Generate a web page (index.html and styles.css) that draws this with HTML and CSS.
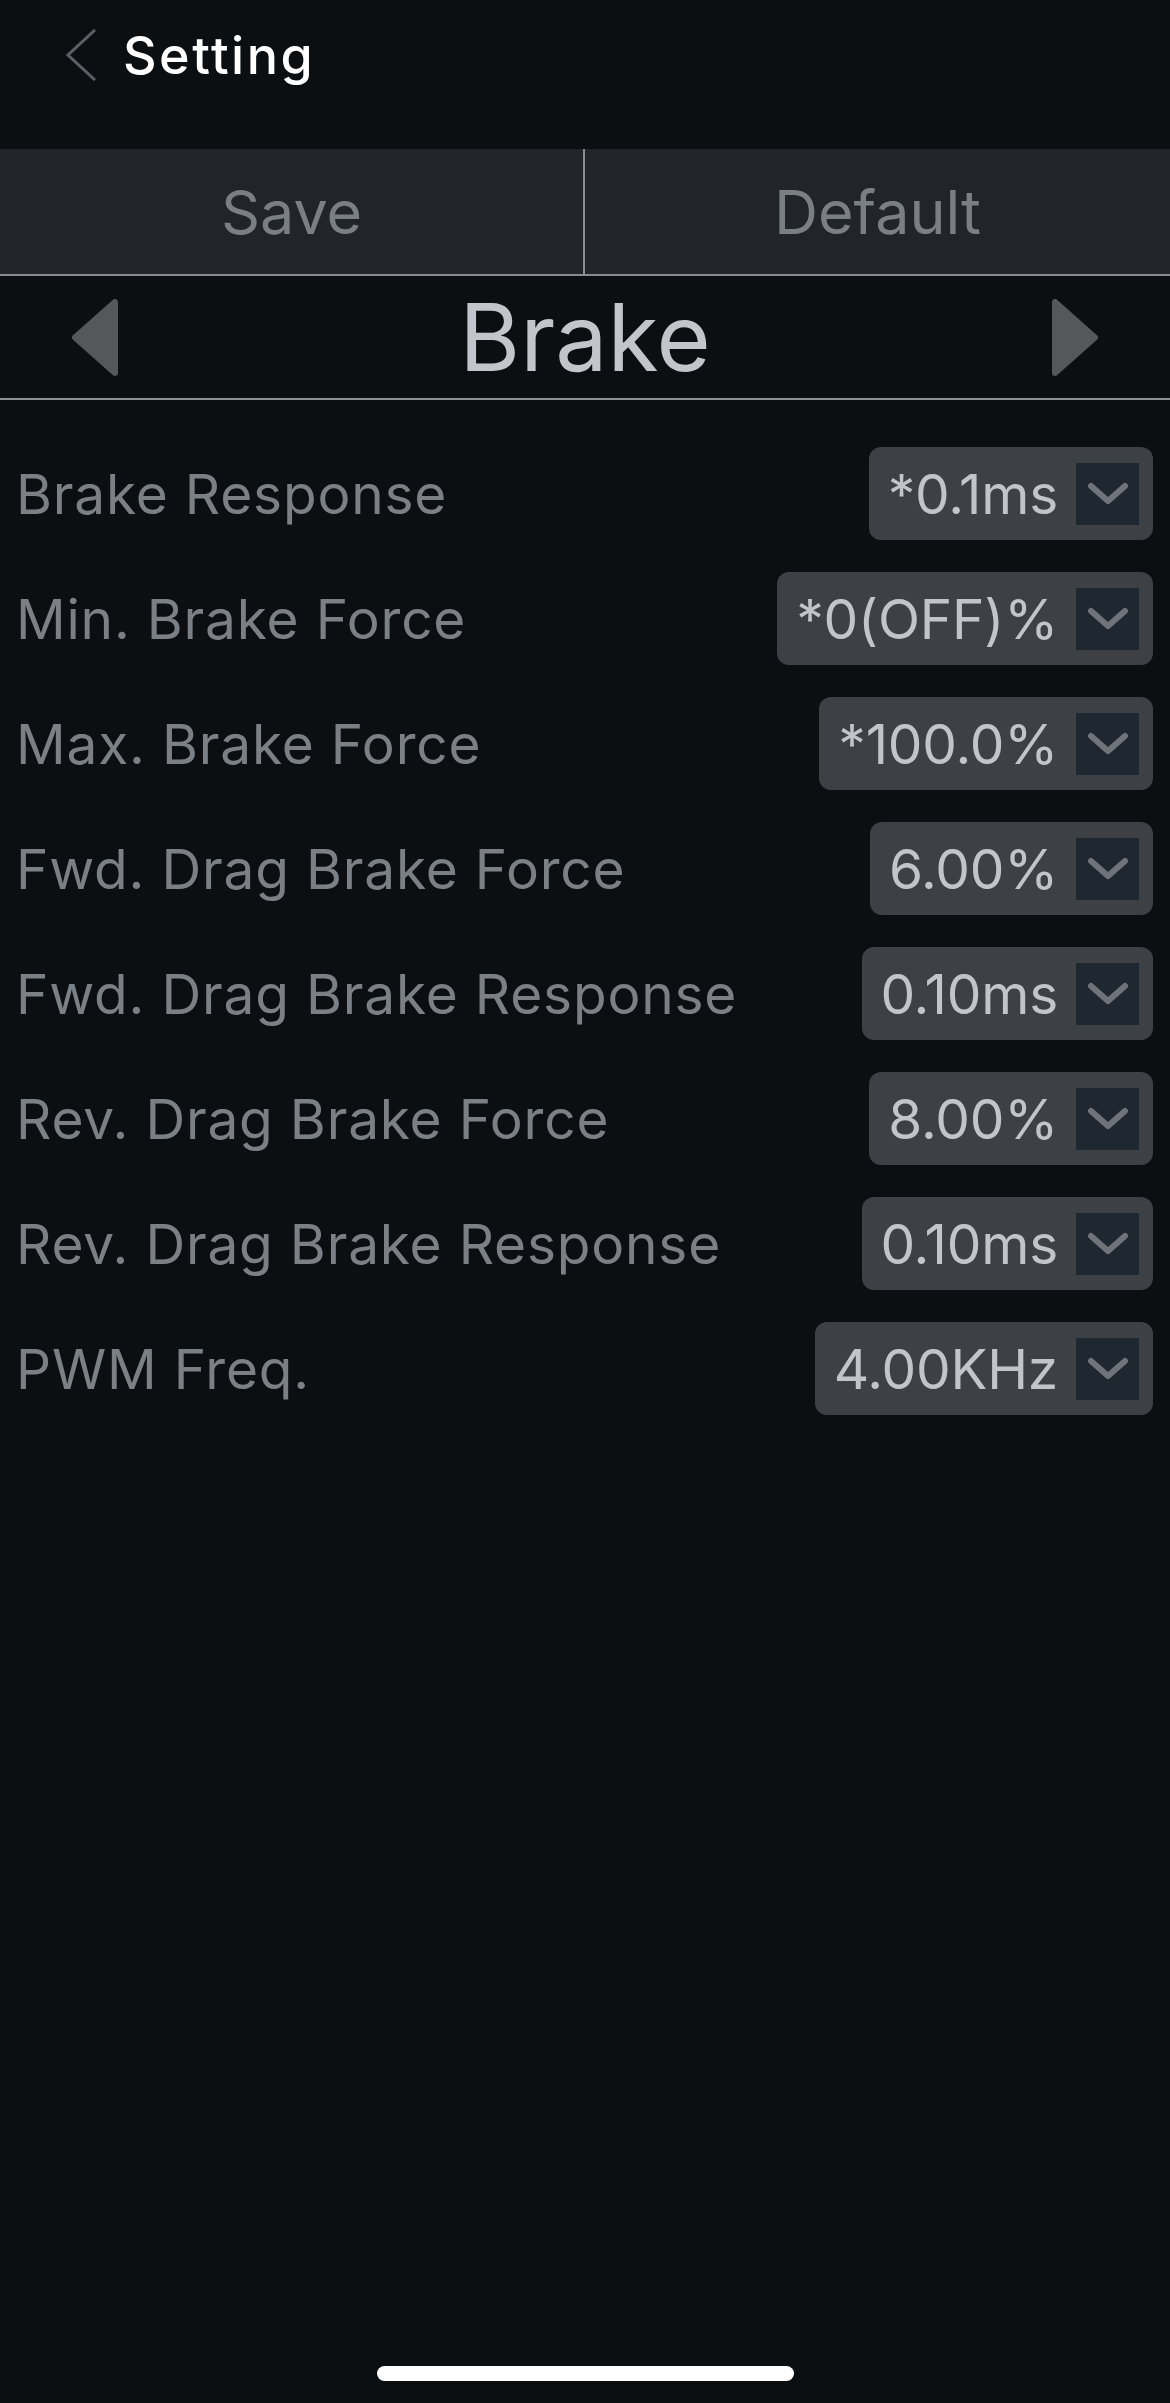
FILE: index.html
```html
<!DOCTYPE html>
<html lang="en">
<head>
  <meta charset="UTF-8">
  <title>Setting</title>
  <link rel="stylesheet" href="styles.css">
</head>
<body>
  <div class="page">
    <header class="top-bar">
      <svg class="back-icon" width="32" height="52" viewBox="0 0 32 52">
        <polyline points="29,1 2,26 29,51" fill="none" stroke="#5b6064" stroke-width="3"/>
      </svg>
      <span class="title">Setting</span>
    </header>

    <div class="actions">
      <div class="action-btn">Save</div>
      <div class="action-btn">Default</div>
    </div>

    <div class="section-nav">
      <svg class="nav-arrow" width="47" height="77" viewBox="0 0 47 77">
        <polygon points="44,3 44,74 4,38.5" fill="#54585b" stroke="#54585b" stroke-width="6" stroke-linejoin="round"/>
      </svg>
      <span class="section-title">Brake</span>
      <svg class="nav-arrow" width="47" height="77" viewBox="0 0 47 77">
        <polygon points="3,3 3,74 43,38.5" fill="#54585b" stroke="#54585b" stroke-width="6" stroke-linejoin="round"/>
      </svg>
    </div>

    <div id="settingList" class="setting-list"></div>

    <div class="home-indicator"></div>
  </div>

  <script>
    // 刹车设置项：名称 + 当前值
    const settings = [
      { name: 'Brake Response', value: '*0.1ms' },
      { name: 'Min. Brake Force', value: '*0(OFF)%' },
      { name: 'Max. Brake Force', value: '*100.0%' },
      { name: 'Fwd. Drag Brake Force', value: '6.00%' },
      { name: 'Fwd. Drag Brake Response', value: '0.10ms' },
      { name: 'Rev. Drag Brake Force', value: '8.00%' },
      { name: 'Rev. Drag Brake Response', value: '0.10ms' },
      { name: 'PWM Freq.', value: '4.00KHz' }
    ];

    const settingList = document.getElementById('settingList');

    function renderSettings() {
      settingList.innerHTML = '';
      settings.forEach(item => {
        const row = document.createElement('div');
        row.className = 'setting-row';

        const label = document.createElement('span');
        label.className = 'setting-label';
        label.textContent = item.name;

        const select = document.createElement('div');
        select.className = 'value-select';

        const value = document.createElement('span');
        value.className = 'value-text';
        value.textContent = item.value;

        const drop = document.createElement('span');
        drop.className = 'drop-btn';
        drop.innerHTML = '<svg width="42" height="24" viewBox="0 0 42 24"><polyline points="4,4 21,19 38,4" fill="none" stroke="#6f747a" stroke-width="6" stroke-linecap="round" stroke-linejoin="round"/></svg>';

        select.appendChild(value);
        select.appendChild(drop);
        row.appendChild(label);
        row.appendChild(select);
        settingList.appendChild(row);
      });
    }

    renderSettings();
  </script>
</body>
</html>
```

FILE: styles.css
```css
* {
  box-sizing: border-box;
}
body {
  margin: 0;
  background-color: #0b0f12;
  font-family: Inter, "Noto Sans", "Liberation Sans", sans-serif;
}
.page {
  position: relative;
  width: 1170px;
  height: 2403px;
  overflow: hidden;
}
.top-bar {
  display: flex;
  align-items: center;
  height: 110px;
  margin-bottom: 39px;
  padding-left: 66px;
}
.back-icon {
  display: block;
}
.title {
  margin-left: 25px;
  color: #ffffff;
  font-size: 52px;
  font-weight: 500;
  letter-spacing: 2.5px;
}
.actions {
  display: grid;
  grid-template-columns: 585px 1fr;
  height: 127px;
  background-color: #212529;
  border-bottom: 2px solid #8a8d90;
}
.action-btn {
  display: flex;
  align-items: center;
  justify-content: center;
  color: #7a7f84;
  font-size: 61px;
}
.action-btn:first-child {
  border-right: 2px solid #8a8d90;
}
.section-nav {
  display: flex;
  align-items: center;
  justify-content: space-between;
  height: 124px;
  padding: 0 71px;
  border-bottom: 2px solid #8e9194;
}
.nav-arrow {
  display: block;
}
.section-title {
  color: #c2c6ca;
  font-size: 93px;
}
.setting-list {
  padding-top: 31px;
}
.setting-row {
  display: flex;
  align-items: center;
  justify-content: space-between;
  height: 125px;
  padding: 0 17px 0 16px;
}
.setting-label {
  color: #7b8085;
  font-size: 55px;
  letter-spacing: 0.8px;
}
.value-select {
  display: flex;
  align-items: center;
  height: 93px;
  padding: 0 14px 0 19px;
  background-color: #3d4145;
  border-radius: 12px;
}
.value-text {
  color: #c1c5c9;
  font-size: 55px;
  letter-spacing: -0.2px;
}
.drop-btn {
  display: flex;
  align-items: center;
  justify-content: center;
  width: 63px;
  height: 62px;
  margin-left: 18px;
  background-color: #1f2731;
}
.home-indicator {
  position: absolute;
  left: 377px;
  top: 2366px;
  width: 417px;
  height: 15px;
  border-radius: 8px;
  background-color: #ffffff;
}
```
